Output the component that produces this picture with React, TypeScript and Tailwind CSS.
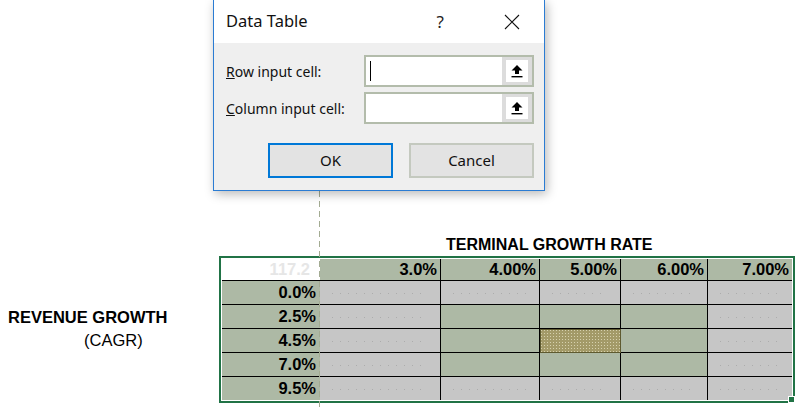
import React from 'react';

type Fill = 'g' | 's' | 'x';

const colWidths = [98, 121, 99, 81, 87, 84];
const headers = ['3.0%', '4.00%', '5.00%', '6.00%', '7.00%'];

const rows: { label: string; cells: Fill[] }[] = [
  { label: '0.0%', cells: ['g', 'g', 'g', 'g', 'g'] },
  { label: '2.5%', cells: ['g', 's', 's', 's', 'g'] },
  { label: '4.5%', cells: ['g', 's', 'x', 's', 'g'] },
  { label: '7.0%', cells: ['g', 's', 's', 's', 'g'] },
  { label: '9.5%', cells: ['g', 'g', 'g', 'g', 'g'] },
];

const UploadArrow = () => (
  <svg width="14" height="14" viewBox="0 0 14 14">
    <path d="M7 1 L12.5 6.5 L9 6.5 L9 10 L5 10 L5 6.5 L1.5 6.5 Z" fill="#000" />
    <rect x="1.5" y="12" width="11" height="1.4" fill="#000" />
  </svg>
);

const RefInput = ({ cursor }: { cursor?: boolean }) => (
  <div className="flex h-[32px] w-[170px] border-2 border-[#b3bcab] bg-white">
    <div className="flex flex-1 items-center pl-[4px]">
      {cursor && <div className="h-[20px] w-px bg-black" />}
    </div>
    <div className="flex w-[30px] items-center justify-center bg-[#dcdcdc] bg-[radial-gradient(#f4f4f4_0.6px,transparent_0.6px)] bg-[length:2px_2px]">
      <div className="flex h-[22px] w-[22px] items-center justify-center bg-white">
        <UploadArrow />
      </div>
    </div>
  </div>
);

const Cell = ({ fill, width, last, lastRow }: { fill: Fill; width: number; last: boolean; lastRow: boolean }) => {
  const bg =
    fill === 'g'
      ? 'bg-[#c6c6c6]'
      : fill === 's'
        ? 'bg-[#adb9a5]'
        : 'bg-[#a39a68] bg-[radial-gradient(#d6d1ae_0.7px,transparent_0.7px)] bg-[length:3px_3px] outline outline-1 -outline-offset-1 outline-[#5e5a30]';
  return (
    <div
      className={`flex items-center ${bg} ${last ? '' : 'border-r border-black'} ${lastRow ? '' : 'border-b border-black'}`}
      style={{ width }}
    >
      {fill === 'g' && (
        <div className="mx-[12px] mt-[2px] h-px flex-1 bg-[repeating-linear-gradient(90deg,#acacac_0_1px,transparent_1px_8px)]" />
      )}
    </div>
  );
};

export default function App() {
  return (
    <div className="relative h-[410px] w-[801px] overflow-hidden bg-white font-['Liberation_Sans',Arial,sans-serif] text-black">
      {/* sheet */}
      <div className="flex pt-[236px]">
        <div className="w-[219px] pt-[72px] text-[16.5px] leading-[18px]">
          <div className="pl-[8px] font-bold">REVENUE GROWTH</div>
          <div className="mt-[5px] pl-[84px]">(CAGR)</div>
        </div>
        <div className="flex flex-col">
          <div className="h-[20px] pl-[227px] text-[16px] font-bold leading-[18px]">TERMINAL GROWTH RATE</div>
          <div className="border-2 border-[#217346] bg-white p-px">
            {/* header */}
            <div className="flex h-[22px]">
              <div className="flex items-center justify-end border-b border-black bg-white pr-[10px] text-[16.5px] font-bold text-[#e6e6e6]" style={{ width: colWidths[0] }}>
                117.2
              </div>
              {headers.map((h, i) => (
                <div
                  key={h}
                  className={`flex items-center justify-end border-b border-black bg-[#adb9a5] pr-[3px] text-[16.5px] font-bold ${i < headers.length - 1 ? 'border-r' : ''}`}
                  style={{ width: colWidths[i + 1] }}
                >
                  {h}
                </div>
              ))}
            </div>
            {rows.map((r, ri) => {
              const lastRow = ri === rows.length - 1;
              return (
                <div key={r.label} className={`flex ${lastRow ? 'h-[23px]' : 'h-[24px]'}`}>
                  <div
                    className={`flex items-center justify-end bg-[#adb9a5] pr-[4px] text-[16.5px] font-bold ${lastRow ? '' : 'border-b border-black'}`}
                    style={{ width: colWidths[0] }}
                  >
                    {r.label}
                  </div>
                  {r.cells.map((c, ci) => (
                    <Cell key={ci} fill={c} width={colWidths[ci + 1]} last={ci === r.cells.length - 1} lastRow={lastRow} />
                  ))}
                </div>
              );
            })}
          </div>
        </div>
      </div>

      {/* page break line */}
      <div className="absolute bottom-0 left-[319px] top-[191px] w-px bg-[repeating-linear-gradient(180deg,#a3ab92_0_6px,transparent_6px_10px)]" />
      {/* fill handle */}
      <div className="absolute left-[788px] top-[396px] h-[7px] w-[7px] border border-white bg-[#217346]" />

      {/* dialog */}
      <div className="absolute left-[213px] top-0 z-10 flex h-[191px] w-[332px] flex-col border border-t-0 border-[#2b7cd3] bg-[#efefef] font-['Noto_Sans',sans-serif] shadow-[2px_3px_10px_rgba(0,0,0,0.28)]">
        <div className="flex h-[43px] items-center bg-white pl-[12px] pr-[24px]">
          <div className="flex-1 text-[16.5px] leading-none text-[#111]">Data Table</div>
          <div className="mr-[60px] text-[17px] leading-none text-[#222]">?</div>
          <svg width="16" height="16" viewBox="0 0 16 16">
            <path d="M1 1 L15 15 M15 1 L1 15" stroke="#111" strokeWidth="1.1" />
          </svg>
        </div>
        <div className="flex flex-1 flex-col pl-[12px] pr-[10px] pt-[12px] text-[14px] text-[#111]">
          <div className="flex items-center justify-between">
            <span>
              <u>R</u>ow input cell:
            </span>
            <RefInput cursor />
          </div>
          <div className="mt-[5px] flex items-center justify-between">
            <span>
              <u>C</u>olumn input cell:
            </span>
            <RefInput />
          </div>
          <div className="mt-[19px] flex justify-end gap-[16px]">
            <button className="h-[35px] w-[125px] border-2 border-[#0078d7] bg-[#e3e3e3] text-[15px] text-[#111]">OK</button>
            <button className="h-[35px] w-[125px] border-2 border-[#c4c9bf] bg-[#e3e3e3] text-[15px] text-[#111]">Cancel</button>
          </div>
        </div>
      </div>
    </div>
  );
}
